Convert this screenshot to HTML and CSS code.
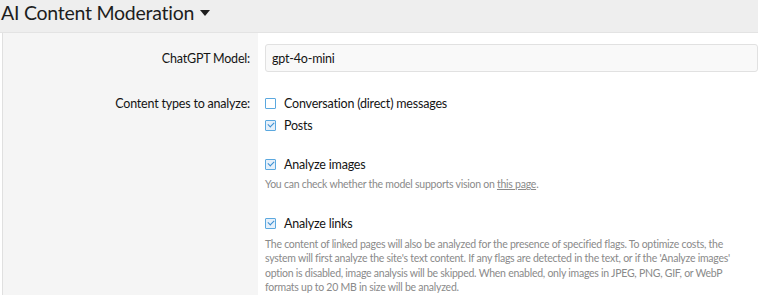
FILE: index.html
```html
<!DOCTYPE html>
<html lang="en">
<head>
    <meta charset="UTF-8">
    <title>AI Content Moderation</title>
    <link rel="stylesheet" href="styles.css">
</head>
<body>
    <div class="block-header">
        <h2>AI Content Moderation <span class="caret"></span></h2>
    </div>
    <div class="block">
        <div class="form-row row-model">
            <div class="form-label">ChatGPT Model:</div>
            <div class="form-field">
                <input class="input" type="text" value="gpt-4o-mini">
            </div>
        </div>

        <div class="form-row row-types">
            <div class="form-label">Content types to analyze:</div>
            <div class="form-field">
                <ul class="choices">
                    <li><span class="check"></span>Conversation (direct) messages</li>
                    <li><span class="check checked"></span>Posts</li>
                </ul>

                <div class="option option-images">
                    <div class="choice"><span class="check checked"></span>Analyze images</div>
                    <p class="hint">You can check whether the model supports vision on <a href="#">this page</a>.</p>
                </div>

                <div class="option option-links">
                    <div class="choice"><span class="check checked"></span>Analyze links</div>
                    <p class="hint">The content of linked pages will also be analyzed for the presence of specified flags. To optimize costs, the system will first analyze the site's text content. If any flags are detected in the text, or if the 'Analyze images' option is disabled, image analysis will be skipped. When enabled, only images in JPEG, PNG, GIF, or WebP formats up to 20 MB in size will be analyzed.</p>
                </div>
            </div>
        </div>
    </div>
</body>
</html>
```

FILE: styles.css
```css
body {
    margin: 0;
    font-family: 'Lato', 'Noto Sans', sans-serif;
    color: #141414;
    background-color: #fff;
    overflow: hidden;
}

.block-header {
    height: 33px;
    background-color: #eeeeee;
    border-bottom: 1px solid #e3e3e3;
    box-sizing: border-box;
}

.block-header h2 {
    margin: 0;
    padding-left: 1px;
    font-size: 19.5px;
    font-weight: 400;
    letter-spacing: -0.25px;
    line-height: 25px;
    color: #1d1d1d;
}

.caret {
    display: inline-block;
    width: 0;
    height: 0;
    margin-left: 1px;
    vertical-align: 4px;
    border-left: 5px solid transparent;
    border-right: 5px solid transparent;
    border-top: 6px solid #1d1d1d;
}

.block {
    margin-left: 2px;
    border-left: 1px solid #e0e0e0;
    background: linear-gradient(to right, #f5f5f5 255px, #fff 255px);
}

.form-row {
    display: flex;
}

.form-label {
    width: 255px;
    flex-shrink: 0;
    box-sizing: border-box;
    padding-right: 8px;
    text-align: right;
    font-size: 12.5px;
    letter-spacing: -0.2px;
    color: #141414;
}

.form-field {
    flex: 1;
    padding-left: 7px;
    font-size: 12.5px;
    letter-spacing: -0.2px;
}

.row-model .form-label {
    padding-top: 18px;
}

.row-model .form-field {
    padding-top: 11px;
}

.input {
    display: block;
    width: 100%;
    height: 28px;
    box-sizing: border-box;
    padding: 0 6px;
    border: 1px solid #e1e1e1;
    border-radius: 3px;
    background-color: #f9f9f9;
    font-family: inherit;
    font-size: 12.5px;
    letter-spacing: -0.2px;
    color: #141414;
}

.row-types .form-label {
    padding-top: 24px;
}

.row-types .form-field {
    padding-top: 20px;
}

.choices {
    list-style: none;
    margin: 0;
    padding: 0;
}

.choices li,
.choice {
    display: flex;
    align-items: center;
    height: 22px;
}

.check {
    width: 9px;
    height: 9px;
    margin-right: 8px;
    border: 1px solid #5ba8df;
    border-radius: 1px;
    background-color: #fff;
    position: relative;
}

.check.checked {
    background-color: #e6f0fa;
}

.check.checked::after {
    content: "";
    position: absolute;
    left: 2px;
    top: 1px;
    width: 5px;
    height: 3px;
    border-left: 1px solid #3a8fd2;
    border-bottom: 1px solid #3a8fd2;
    transform: rotate(-45deg);
}

.option-images {
    margin-top: 17px;
}

.option-links {
    margin-top: 21px;
}

.hint {
    margin: 2px 0 0;
    padding-right: 12px;
    font-size: 10.5px;
    letter-spacing: -0.25px;
    line-height: 14.6px;
    color: #8a8a8a;
}

.hint a {
    color: #8a8a8a;
    text-decoration: underline;
}
```
